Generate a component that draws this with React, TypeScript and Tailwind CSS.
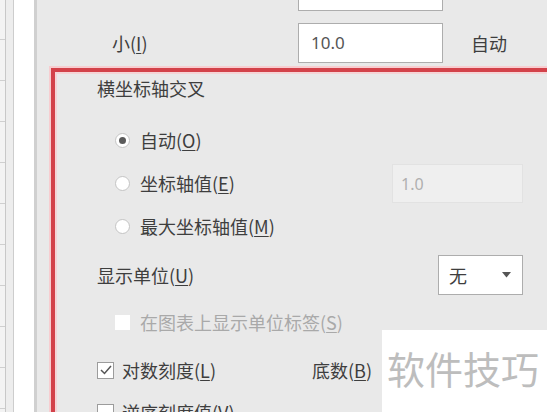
const cjk = "font-['Noto_Sans_CJK_SC','Noto_Sans',sans-serif]";

function Radio({ checked }: { checked?: boolean }) {
  return (
    <span className="w-[15px] h-[15px] rounded-full bg-white border border-[#c4c4c4] flex items-center justify-center shrink-0">
      {checked && <span className="w-[7px] h-[7px] rounded-full bg-[#5a5a5a]" />}
    </span>
  );
}

function Mn({ k }: { k: string }) {
  // access key with underline, like (O)
  return (
    <span>
      (<span className="underline underline-offset-2">{k}</span>)
    </span>
  );
}

const ticks = [39, 80, 121, 162, 203, 244, 285, 326, 367, 408];

export default function App() {
  return (
    <div className={`relative w-[547px] h-[412px] overflow-hidden flex bg-[#e9e9e9] ${cjk}`}>
      {/* sheet edge on the left */}
      <div className="w-[37px] h-full flex shrink-0">
        <div className="w-[5px] h-full bg-[#f3f3f3] flex flex-col">
          {ticks.map((t, i) => (
            <div key={t} className={`h-px w-full bg-[#cfcfcf] ${i === 0 ? "mt-[39px]" : "mt-[40px]"}`} />
          ))}
        </div>
        <div className="w-px h-full bg-[#c8c8c8]" />
        <div className="w-[7px] h-full bg-[#ededed]" />
        <div className="w-px h-full bg-[#cdcdcd]" />
        <div className="w-[20px] h-full bg-white" />
        <div className="w-[3px] h-full bg-[#d0d0d0]" />
      </div>

      <div className="flex-1 flex flex-col text-[18px] text-[#3e3e3e]">
        {/* 大 row, mostly scrolled off */}
        <div className="mt-[-29px] h-[40px] flex items-center">
          <div className="w-[261px] pl-[70px] -mt-[5px]">
            大<Mn k="A" />
          </div>
          <div className="w-[145px] h-[40px] bg-white border border-[#adadad]" />
          <div className="ml-[28px] -mt-[5px] text-[#9a9a9a]">自动</div>
        </div>

        {/* 小 row */}
        <div className="mt-[12px] h-[40px] flex items-center">
          <div className="w-[261px] pl-[75px]">
            小<Mn k="I" />
          </div>
          <div className="w-[145px] h-[40px] bg-white border border-[#adadad] flex items-center pl-[12px] font-['Noto_Sans',sans-serif] text-[17px] text-[#555]">
            10.0
          </div>
          <div className="ml-[28px]">自动</div>
        </div>

        {/* highlighted block */}
        <div className="mt-[5px] ml-[14px] w-[620px] h-[500px] border-l-4 border-t-4 border-[#d3424a] shadow-[0_0_0_2px_#f7cdd0,inset_0_0_0_2px_#f5d4d6] flex flex-col">
          <div className="mt-[4px] h-[24px] pl-[42px] leading-[24px]">横坐标轴交叉</div>

          <div className="mt-[19px] h-[43px] flex items-center pl-[60px] gap-[10px]">
            <Radio checked />
            <span>
              自动<Mn k="O" />
            </span>
          </div>
          <div className="h-[43px] flex items-center">
            <div className="w-[337px] pl-[60px] flex items-center gap-[10px]">
              <Radio />
              <span>
                坐标轴值<Mn k="E" />
              </span>
            </div>
            <div className="w-[131px] h-[39px] bg-[#efefef] border border-[#e2e2e2] flex items-center pl-[8px] font-['Noto_Sans',sans-serif] text-[16px] text-[#b0b0b0]">
              1.0
            </div>
          </div>
          <div className="h-[43px] flex items-center pl-[60px] gap-[10px]">
            <Radio />
            <span>
              最大坐标轴值<Mn k="M" />
            </span>
          </div>

          <div className="mt-[7px] h-[40px] flex items-center">
            <div className="w-[383px] pl-[42px]">
              显示单位<Mn k="U" />
            </div>
            <div className="w-[85px] h-[40px] bg-white border border-[#adadad] flex items-center justify-between pl-[10px] pr-[11px]">
              <span>无</span>
              <svg width="9" height="6" viewBox="0 0 9 6">
                <path d="M0 0 L9 0 L4.5 5.5 Z" fill="#555" />
              </svg>
            </div>
          </div>

          <div className="mt-[7px] h-[40px] flex items-center pl-[60px] gap-[10px] text-[#a9a9a9]">
            <span className="w-[15px] h-[15px] bg-white shrink-0" />
            <span>
              在图表上显示单位标签<Mn k="S" />
            </span>
          </div>

          <div className="mt-[8px] h-[40px] flex items-center">
            <div className="w-[257px] pl-[42px] flex items-center gap-[8px]">
              <span className="w-[17px] h-[17px] bg-white border border-[#9c9c9c] flex items-center justify-center shrink-0">
                <svg width="12" height="10" viewBox="0 0 12 10">
                  <path d="M1 5 L4.5 8.5 L11 1" fill="none" stroke="#555" strokeWidth="1.5" />
                </svg>
              </span>
              <span>
                对数刻度<Mn k="L" />
              </span>
            </div>
            <span>
              底数<Mn k="B" />
            </span>
          </div>

          <div className="mt-[2px] h-[40px] flex items-center pl-[42px] gap-[8px]">
            <span className="w-[17px] h-[17px] bg-white border border-[#9c9c9c] shrink-0" />
            <span>
              逆序刻度值<Mn k="V" />
            </span>
          </div>
        </div>
      </div>

      {/* watermark patch */}
      <div className="absolute left-[382px] top-[330px] right-0 bottom-0 bg-white flex items-center pl-[5px] pb-[8px] text-[38px] text-[#bdbdbd]">
        软件技巧
      </div>
    </div>
  );
}
